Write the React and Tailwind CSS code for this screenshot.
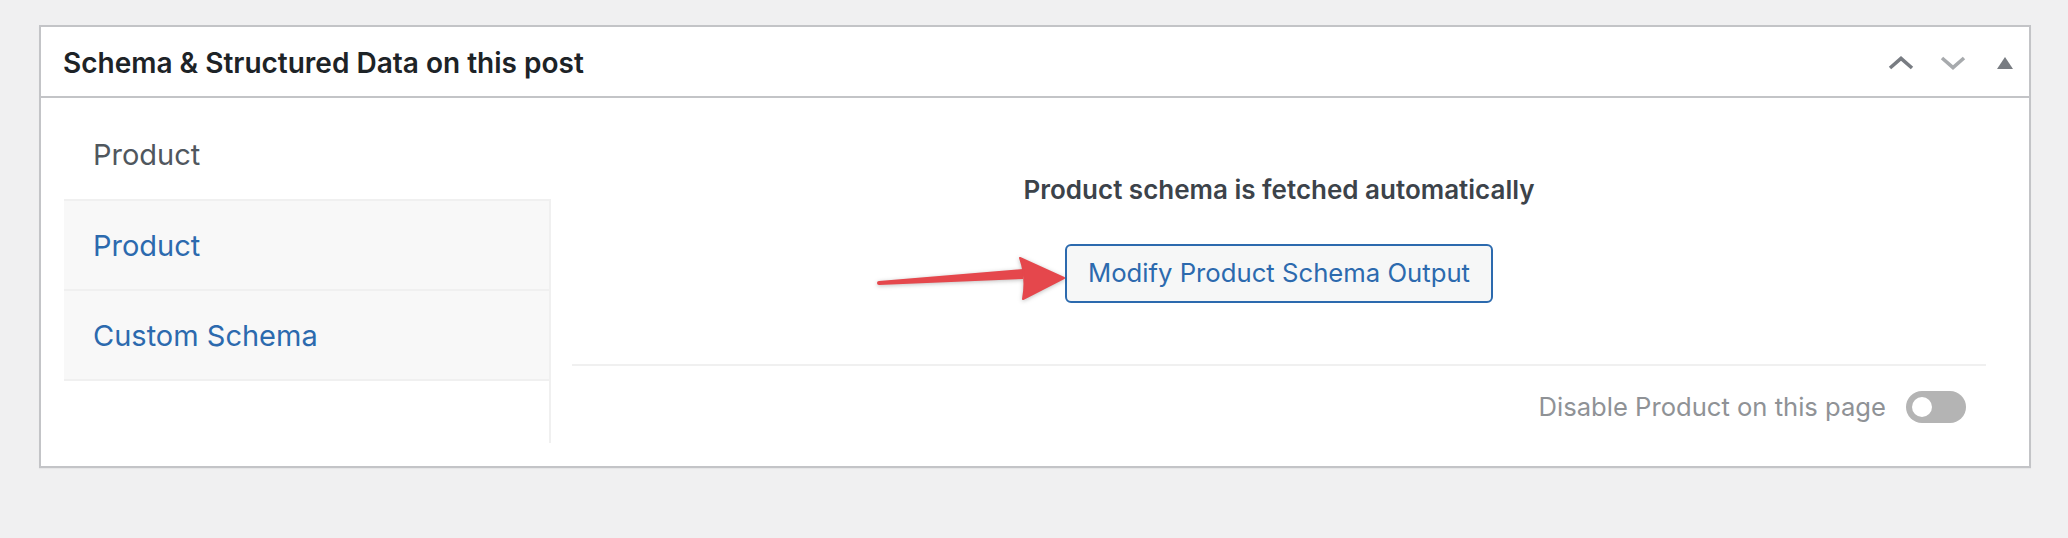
import React from "react";

function ChevronUp({ color }) {
  return (
    <svg width="26" height="14" viewBox="0 0 26 14">
      <polyline points="2,12 13,2.5 24,12" fill="none" stroke={color} strokeWidth="3.6" />
    </svg>
  );
}

function ChevronDown({ color }) {
  return (
    <svg width="26" height="14" viewBox="0 0 26 14">
      <polyline points="2,2 13,11.5 24,2" fill="none" stroke={color} strokeWidth="3.6" />
    </svg>
  );
}

function Arrow() {
  // red annotation arrow pointing at the button
  return (
    <svg
      className="absolute left-[870px] top-[250px] drop-shadow-[0_1px_2px_rgba(0,0,0,0.25)]"
      width="200"
      height="60"
      viewBox="0 0 200 60"
    >
      <path d="M9 31 L153 19 L153 29 L9 35 A2 2 0 0 1 9 31 Z" fill="#e5474c" />
      <path
        d="M150 8 L194 28 L153 49 Q157 28 150 8 Z"
        fill="#e5474c"
        stroke="#e5474c"
        strokeWidth="2"
        strokeLinejoin="round"
      />
    </svg>
  );
}

const tabs = ["Product", "Custom Schema"];

export default function App() {
  return (
    <div className="relative min-h-screen bg-[#f0f0f1] pl-[39px] pr-[37px] pt-[25px] font-['Inter',sans-serif]">
      <div className="border-2 border-[#c3c4c7] bg-white shadow-[0_1px_1px_rgba(0,0,0,0.04)]">
        <div className="flex h-[71px] items-center border-b-2 border-[#c3c4c7] pl-[22px] pr-[16px] pt-[2px]">
          <h2 className="text-[28px] font-semibold text-[#1d2327]">
            Schema &amp; Structured Data on this post
          </h2>
          <div className="ml-auto flex items-center">
            <ChevronUp color="#787c82" />
            <div className="ml-[26px]">
              <ChevronDown color="#a7aaad" />
            </div>
            <svg className="ml-[31px]" width="16" height="12" viewBox="0 0 16 12">
              <polygon points="0,12 8,0 16,12" fill="#787c82" />
            </svg>
          </div>
        </div>

        <div className="flex pb-[23px] pl-[23px] pr-[43px] pt-[10px]">
          <div className="w-[487px]">
            <div className="flex h-[91px] items-center pl-[29px] pt-[3px] text-[29px] text-[#50575e]">
              Product
            </div>
            <ul className="h-[244px] border-r-2 border-t-2 border-[#f0f0f0]">
              {tabs.map((t) => (
                <li
                  key={t}
                  className="flex h-[90px] items-center border-b-2 border-[#f0f0f0] bg-[#f8f8f8] pl-[29px] pt-[1px] text-[29px] text-[#2c6aae]"
                >
                  {t}
                </li>
              ))}
            </ul>
          </div>

          <div className="ml-[21px] flex flex-1 flex-col">
            <p className="mt-[64px] text-center text-[26px] font-semibold leading-[36px] text-[#3c434a]">
              Product schema is fetched automatically
            </p>
            <button className="mx-auto mt-[36px] h-[59px] rounded-[6px] border-2 border-[#2c6aae] bg-[#f6f7f7] px-[21px] text-[25.7px] text-[#2c6aae]">
              Modify Product Schema Output
            </button>
            <div className="mt-[61px] h-[2px] bg-[#f0f0f0]" />
            <div className="mt-[25px] flex h-[32px] items-center justify-end gap-[20px] pr-[20px]">
              <span className="text-[25.6px] text-[#8f9296]">Disable Product on this page</span>
              <div className="flex h-[32px] w-[60px] items-center rounded-full bg-[#b4b4b4] pl-[6px]">
                <div className="h-[20px] w-[20px] rounded-full bg-white" />
              </div>
            </div>
          </div>
        </div>
      </div>
      <Arrow />
    </div>
  );
}
